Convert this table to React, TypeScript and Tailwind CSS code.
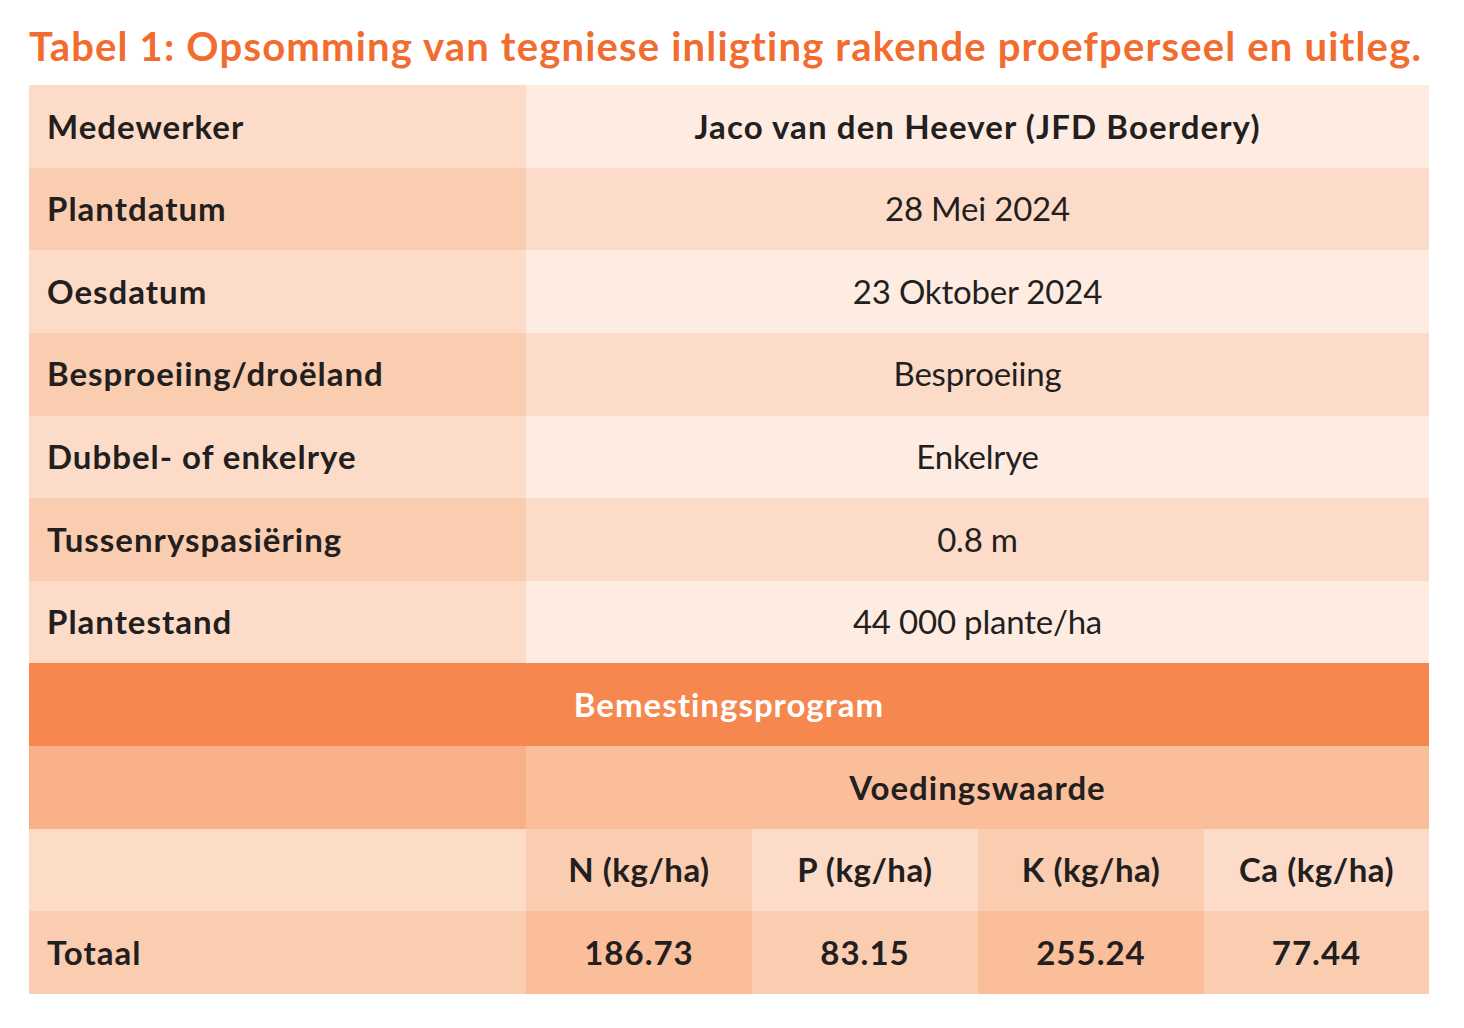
import React from "react";

const F = { fontFamily: "Lato, 'Noto Sans', sans-serif" };

const rows: [string, string, boolean][] = [
  ["Medewerker", "Jaco van den Heever (JFD Boerdery)", true],
  ["Plantdatum", "28 Mei 2024", false],
  ["Oesdatum", "23 Oktober 2024", false],
  ["Besproeiing/droëland", "Besproeiing", false],
  ["Dubbel- of enkelrye", "Enkelrye", false],
  ["Tussenryspasiëring", "0.8 m", false],
  ["Plantestand", "44 000 plante/ha", false],
];

export default function App() {
  return (
    <div className="w-[1464px] h-[1028px] bg-white text-[#231f20] [font-variant-ligatures:none]" style={F}>
      <div className="pl-[29px] pt-[22px] h-[85px] text-[40px] leading-[48px] font-bold text-[#f26c2f] tracking-[1.17px] whitespace-nowrap">
        Tabel 1: Opsomming van tegniese inligting rakende proefperseel en uitleg.
      </div>
      <div className="ml-[29px] w-[1400px] h-[909px] grid grid-cols-[497px_226px_226px_226px_225px] grid-rows-11 text-[33px]">
        {rows.map(([k, v, b], i) => {
          const even = i % 2 === 1;
          return (
            <React.Fragment key={k}>
              <div className={`flex items-center pl-[18px] font-bold tracking-[1px] ${even ? "bg-[#fbcdb0]" : "bg-[#fcdcc8]"}`}>{k}</div>
              <div className={`col-span-4 flex items-center justify-center ${b ? "font-bold tracking-[1.1px]" : "font-normal tracking-[-0.2px]"} ${even ? "bg-[#fcdcc9]" : "bg-[#feece2]"}`}>{v}</div>
            </React.Fragment>
          );
        })}
        <div className="col-span-5 flex items-center justify-center bg-[#f5874f] text-white font-bold tracking-[1px]">Bemestingsprogram</div>
        <div className="bg-[#f9b088]" />
        <div className="col-span-4 flex items-center justify-center bg-[#fabe9a] font-bold tracking-[1px]">Voedingswaarde</div>
        <div className="bg-[#fcdbc7]" />
        <div className="flex items-center justify-center bg-[#fbcdb0] font-bold tracking-[0.5px]">N (kg/ha)</div>
        <div className="flex items-center justify-center bg-[#fcdcc8] font-bold tracking-[0.5px]">P (kg/ha)</div>
        <div className="flex items-center justify-center bg-[#fbcdb0] font-bold tracking-[0.5px]">K (kg/ha)</div>
        <div className="flex items-center justify-center bg-[#fcdcc8] font-bold tracking-[0.5px]">Ca (kg/ha)</div>
        <div className="flex items-center pl-[18px] bg-[#fbcdb0] font-bold tracking-[1px]">Totaal</div>
        <div className="flex items-center justify-center bg-[#fabe9a] font-bold tracking-[1px]">186.73</div>
        <div className="flex items-center justify-center bg-[#fbcdb0] font-bold tracking-[1px]">83.15</div>
        <div className="flex items-center justify-center bg-[#fabe9a] font-bold tracking-[1px]">255.24</div>
        <div className="flex items-center justify-center bg-[#fbcdb0] font-bold tracking-[1px]">77.44</div>
      </div>
    </div>
  );
}
